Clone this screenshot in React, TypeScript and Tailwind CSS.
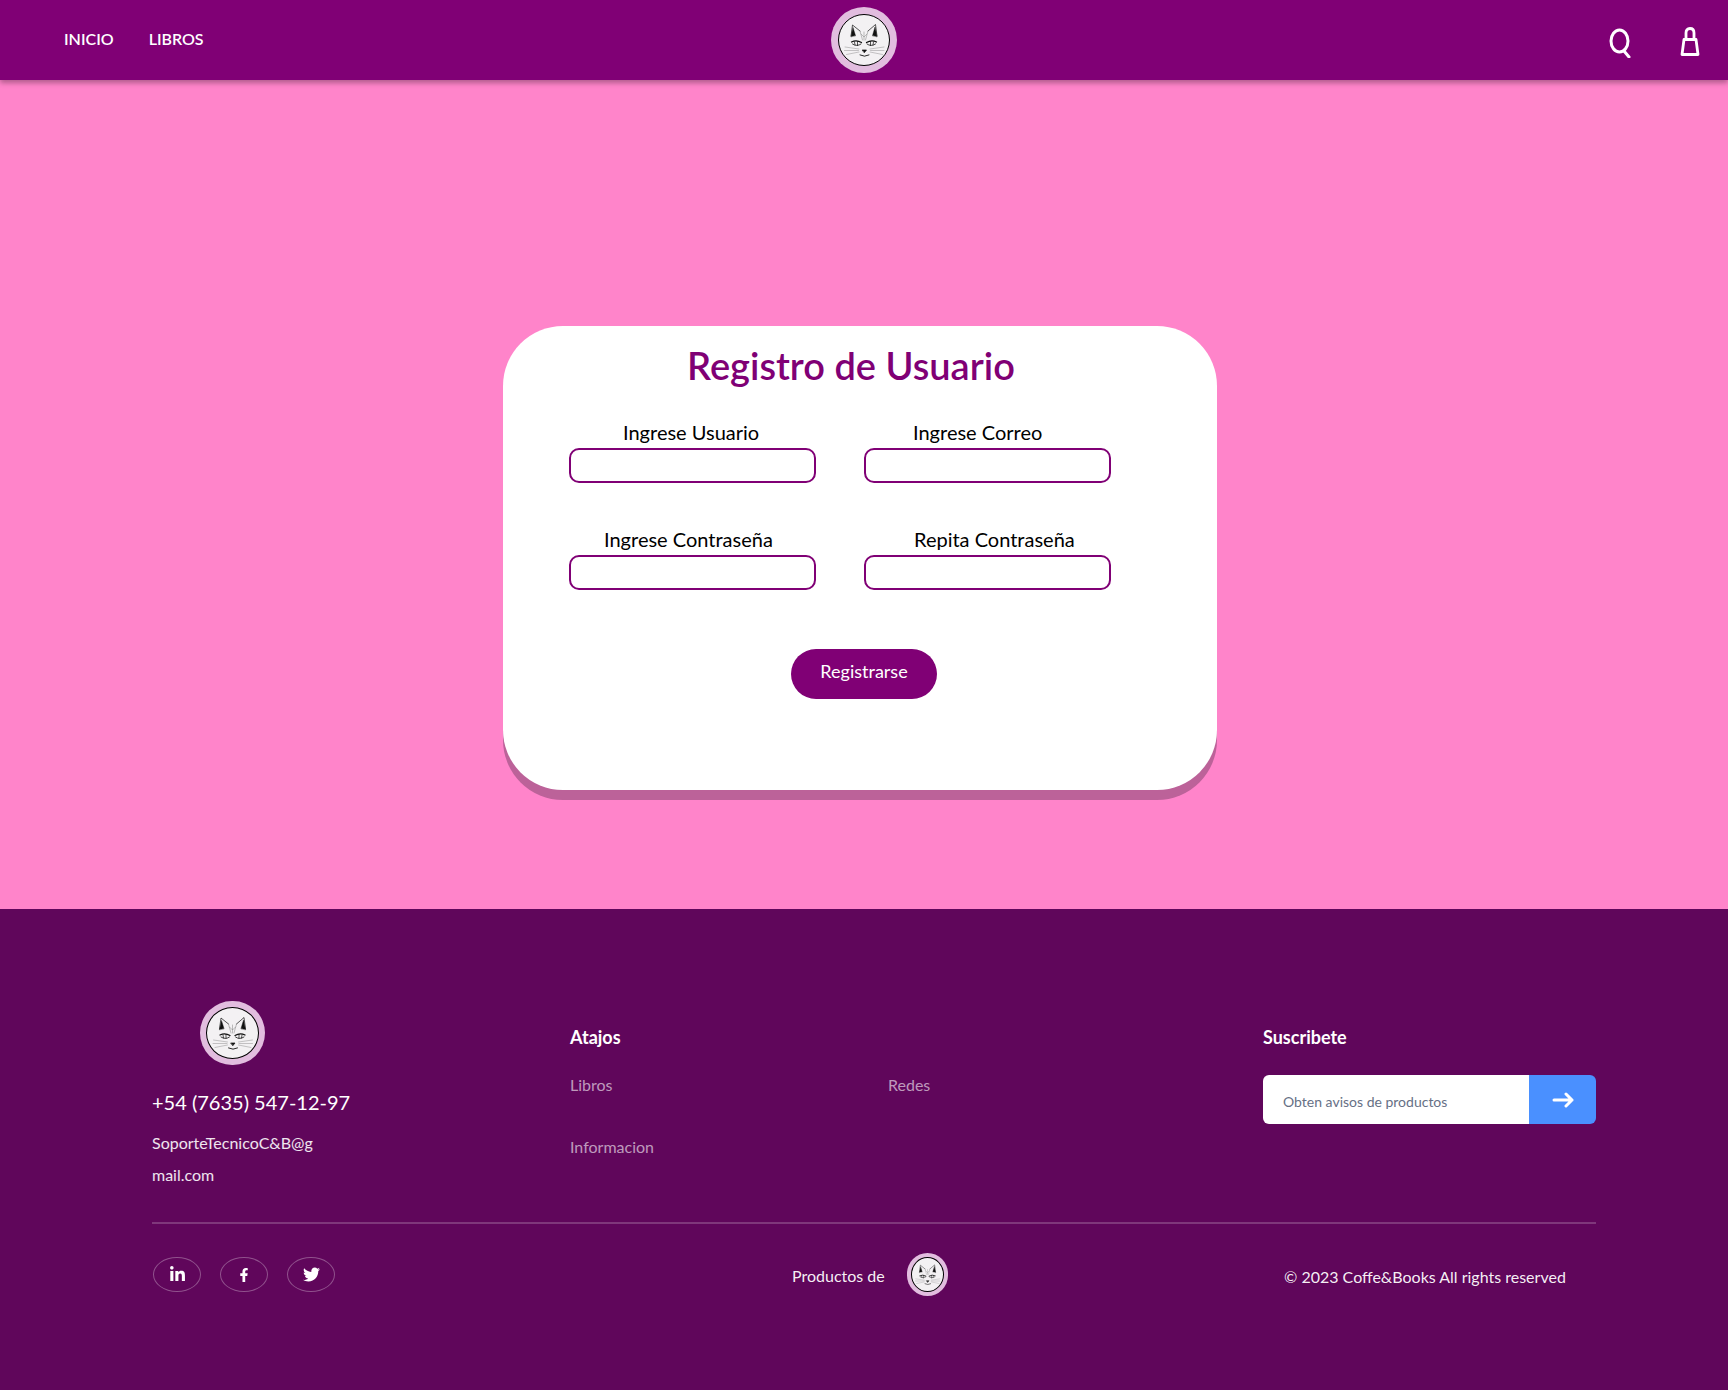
import { FaFacebookF, FaLinkedinIn, FaTwitter } from 'react-icons/fa';

function CatLogo({ size, ring }: { size: string; ring: string }) {
  return (
    <div className={`${size} ${ring} shrink-0 rounded-full bg-[#e2bddf] flex items-center justify-center`}>
      <svg viewBox="0 0 100 100" className="w-full h-full rounded-[50%] bg-[#f3f1f3] border-[1.5px] border-black">
        <g fill="none" stroke="#111" strokeLinecap="round" strokeLinejoin="round">
          <path d="M24 42 L27 20 L42 32 M58 32 L73 19 L76 42" strokeWidth="1.4" />
          <path d="M24 43 L28 25 L33 41 Z M76 43 L72 24 L67 41 Z" fill="#111" strokeWidth="0.8" />
          <path d="M42 32 L47 50 M58 32 L53 50 M50 34 L50 50 M44 38 L50 44 L56 38" strokeWidth="0.9" stroke="#777" />
          <path d="M25 54 Q35 49 45 55 M55 55 Q65 49 75 54" strokeWidth="2.6" />
          <path d="M27 58 Q36 64 44 58 M56 58 Q64 64 73 58" strokeWidth="1.6" />
          <path d="M31 54 L32 60 M37 53 L37 61 M69 54 L68 60 M63 53 L63 61" strokeWidth="1.4" />
          <path d="M47 70 L55 70 L51 75 Z" fill="#111" strokeWidth="1.4" />
          <path d="M42 80 Q51 85 60 80" strokeWidth="1.8" />
          <path d="M12 64 L40 68 M11 71 L39 71 M15 79 L40 74 M90 64 L62 68 M90 71 L63 71 M87 79 L62 74" strokeWidth="0.8" stroke="#777" />
        </g>
      </svg>
    </div>
  );
}

function Field({ label, offset }: { label: string; offset: string }) {
  return (
    <div className="flex flex-col w-[247px]">
      <label className={`${offset} text-[20px] leading-[24px] text-black mb-[4px]`}>{label}</label>
      <input className="h-[35px] w-full rounded-[10px] border-2 border-[#800075] bg-white outline-none" />
    </div>
  );
}

function SocialLink({ children }: { children: React.ReactNode }) {
  return (
    <a className="w-[48px] h-[35px] rounded-[50%] border border-white/30 flex items-center justify-center text-white">
      {children}
    </a>
  );
}

export default function App() {
  return (
    <div className="min-h-[1390px] flex flex-col bg-[#ff84ca] font-['Lato','Noto_Sans',sans-serif]">
      <header className="h-20 bg-[#800075] shadow-[0_3px_5px_rgba(0,0,0,0.3)] flex items-center justify-between pl-16 pr-[28px] relative">
        <nav className="w-[400px] flex gap-[35px] text-white text-[16px] font-semibold pb-[2px]">
          <a>INICIO</a>
          <a>LIBROS</a>
        </nav>
        <CatLogo size="w-[66px] h-[66px]" ring="p-[7px]" />
        <div className="w-[436px] flex justify-end items-center gap-[49px] pt-[4px]">
          <svg width="22" height="30" viewBox="0 0 22 30" fill="none" stroke="white" strokeWidth="3" strokeLinecap="round" className="mt-[2px]">
            <ellipse cx="10.5" cy="13" rx="8.5" ry="11" />
            <path d="M15 23 L20 29" />
          </svg>
          <svg width="20" height="30" viewBox="0 0 20 30" fill="none" stroke="white" strokeWidth="2.8" strokeLinejoin="round">
            <path d="M4 12.5 L16 12.5 L18 27.5 L2 27.5 Z" />
            <path d="M6 12.5 V6 Q6 1.5 10 1.5 Q14 1.5 14 6 V12.5" />
          </svg>
        </div>
      </header>

      <main className="flex justify-center pt-[246px] pb-[119px] pr-[8px]">
        <div className="w-[714px] h-[464px] rounded-[60px] bg-white shadow-[0_10px_0_#bc6299] flex flex-col">
          <h1 className="pl-[184px] pt-[16px] text-[38px] leading-[46px] font-semibold text-[#800075]">Registro de Usuario</h1>
          <div className="pl-[66px] pt-[32px] grid grid-cols-[247px_247px] gap-x-[48px] gap-y-[44px]">
            <Field label="Ingrese Usuario" offset="pl-[54px]" />
            <Field label="Ingrese Correo" offset="pl-[49px]" />
            <Field label="Ingrese Contraseña" offset="pl-[35px]" />
            <Field label="Repita Contraseña" offset="pl-[50px]" />
          </div>
          <div className="flex justify-center pl-[8px] pt-[59px]">
            <button className="w-[146px] h-[50px] rounded-full bg-[#800075] text-white text-[18px] pb-[5px]">Registrarse</button>
          </div>
        </div>
      </main>

      <footer className="flex-1 bg-[#60065b] pl-[152px] pr-[132px] pt-[92px] text-white">
        <div className="flex h-[221px]">
          <div className="w-[418px]">
            <div className="pl-[48px]">
              <CatLogo size="w-[65px] h-[64px]" ring="p-[6px]" />
            </div>
            <p className="pt-[25px] text-[20px] leading-[24px] text-white">+54 (7635) 547-12-97</p>
            <p className="w-[170px] pt-[13px] text-[16px] leading-[32px] text-white/90 break-all">SoporteTecnicoC&amp;B@gmail.com</p>
          </div>
          <div className="w-[693px] pt-[24px]">
            <h3 className="text-[18px] leading-[24px] font-bold">Atajos</h3>
            <div className="pt-[24px] grid grid-cols-[318px_1fr] gap-y-[38px] text-[16px] leading-[24px] text-white/60">
              <a>Libros</a>
              <a>Redes</a>
              <a>Informacion</a>
            </div>
          </div>
          <div className="w-[333px] pt-[24px]">
            <h3 className="text-[18px] leading-[24px] font-bold">Suscribete</h3>
            <div className="mt-[26px] flex h-[49px] rounded-[6px] overflow-hidden">
              <input placeholder="Obten avisos de productos" className="w-[266px] bg-white pl-[20px] pt-[3px] text-[14px] text-[#4b5563] placeholder:text-[#667085] outline-none" />
              <button className="flex-1 bg-[#4a90ff] flex items-center justify-center">
                <svg width="22" height="16" viewBox="0 0 22 16" fill="none" stroke="white" strokeWidth="3" strokeLinecap="round" strokeLinejoin="round">
                  <path d="M2 8 H20 M14 2 L20 8 L14 14" />
                </svg>
              </button>
            </div>
          </div>
        </div>
        <div className="h-[2px] bg-white/20" />
        <div className="flex items-center pt-[29px]">
          <div className="w-[640px] flex gap-[19px] pl-px">
            <SocialLink><FaLinkedinIn className="text-[17px]" /></SocialLink>
            <SocialLink><FaFacebookF className="text-[14px]" /></SocialLink>
            <SocialLink><FaTwitter className="text-[17px]" /></SocialLink>
          </div>
          <div className="w-[492px] flex items-center gap-[22px] text-[16px] text-white/95">
            <span className="pt-[2px]">Productos de</span>
            <CatLogo size="w-[41px] h-[43px]" ring="p-[4px]" />
          </div>
          <p className="text-[16px] text-white/95 pt-[5px]">© 2023 Coffe&amp;Books All rights reserved</p>
        </div>
      </footer>
    </div>
  );
}
